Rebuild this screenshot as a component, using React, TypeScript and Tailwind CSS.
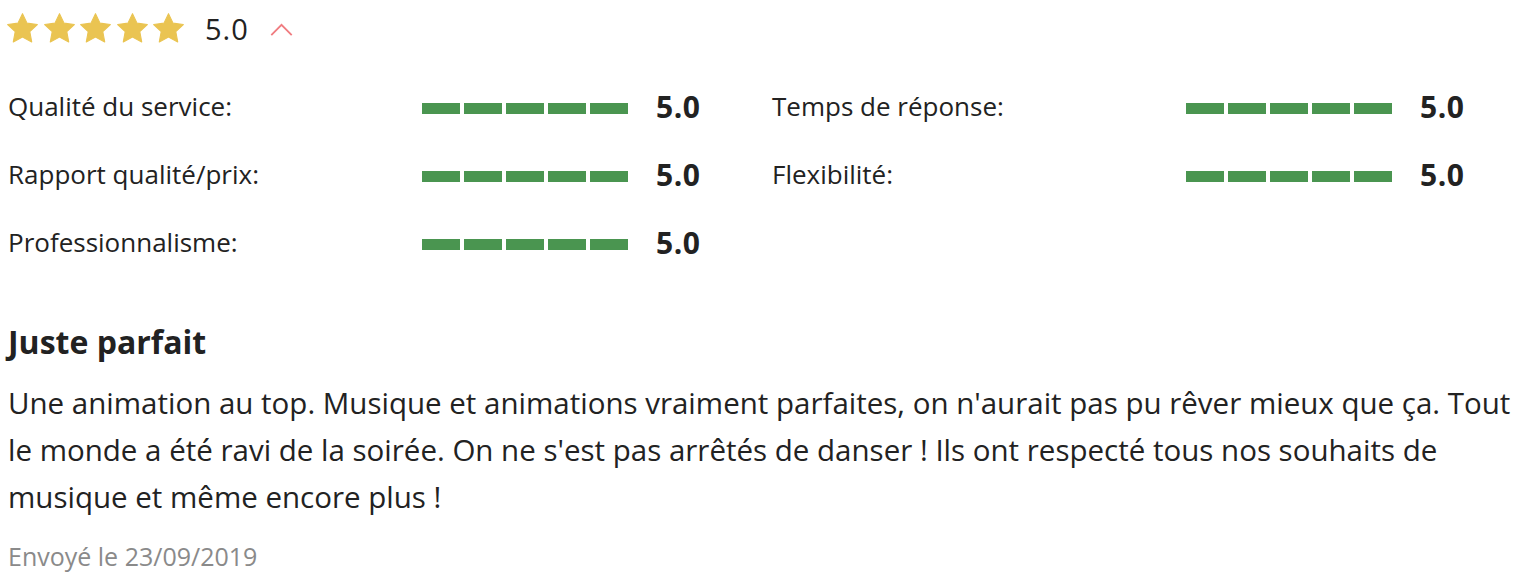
import React from "react";

const ratings = [
  { label: "Qualité du service:", value: "5.0" },
  { label: "Temps de réponse:", value: "5.0" },
  { label: "Rapport qualité/prix:", value: "5.0" },
  { label: "Flexibilité:", value: "5.0" },
  { label: "Professionnalisme:", value: "5.0" },
];

function Star() {
  return (
    <svg viewBox="0 0 24 24" className="w-[33px] h-[33px]">
      <path
        d="M12 1.2l3.3 6.9 7.5 1-5.5 5.2 1.4 7.5L12 18.2l-6.7 3.6 1.4-7.5L1.2 9.1l7.5-1z"
        fill="#EAC452"
        stroke="#EAC452"
        strokeWidth="0.8"
        strokeLinejoin="round"
      />
    </svg>
  );
}

function Bar() {
  return (
    <div className="flex gap-1 mt-[5px]">
      {[0, 1, 2, 3, 4].map((i) => (
        <div key={i} className="w-[38px] h-[11px] bg-[#4A9550]" />
      ))}
    </div>
  );
}

export default function App() {
  return (
    <div className="bg-white w-[1530px] h-[578px] px-2 text-[#222222] font-['Open_Sans',sans-serif] overflow-hidden">
      {/* Overall score */}
      <div className="flex items-center h-[56px]">
        <div className="flex gap-[3.5px] -ml-[2px]">
          <Star />
          <Star />
          <Star />
          <Star />
          <Star />
        </div>
        <span className="ml-[20px] text-[29px] leading-none tracking-[1px]">5.0</span>
        <svg viewBox="0 0 24 14" className="ml-[21px] w-[23px] h-[13px] mt-[2px]" fill="none">
          <polyline points="1,13 12,2 23,13" stroke="#F07C80" strokeWidth="2" />
        </svg>
      </div>

      {/* Detail ratings */}
      <div className="grid grid-cols-[764px_auto] mt-4">
        {ratings.map((r) => (
          <div key={r.label} className="flex items-center h-[68px]">
            <span className="w-[414px] text-[26px]">{r.label}</span>
            <Bar />
            <span className="ml-[28px] text-[30px] font-bold tracking-[0.5px]">{r.value}</span>
          </div>
        ))}
      </div>

      {/* Review */}
      <h3 className="mt-[46px] text-[32px] leading-[40px] font-bold">Juste parfait</h3>
      <p className="mt-[17px] text-[29.5px] leading-[47px] whitespace-nowrap">
        Une animation au top. Musique et animations vraiment parfaites, on n'aurait pas pu rêver mieux que ça. Tout
        <br />
        le monde a été ravi de la soirée. On ne s'est pas arrêtés de danser ! Ils ont respecté tous nos souhaits de
        <br />
        musique et même encore plus !
      </p>
      <p className="mt-[21px] text-[25px] leading-[30px] text-[#8A8A8A]">Envoyé le 23/09/2019</p>
    </div>
  );
}
